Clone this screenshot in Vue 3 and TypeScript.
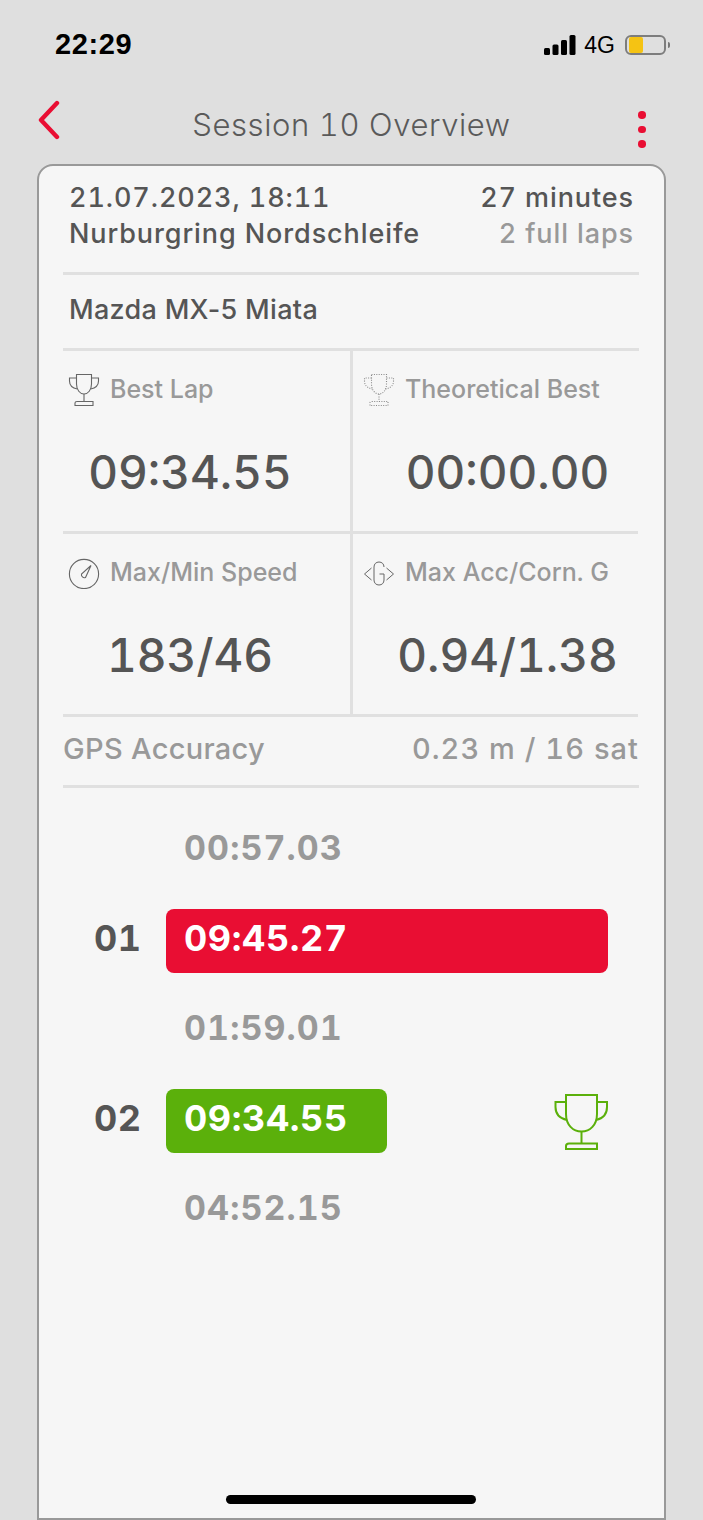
<script setup lang="ts">
interface Stat { label: string; value: string; icon: string }
const stats: Stat[] = [
  { label: 'Best Lap', value: '09:34.55', icon: 'trophy' },
  { label: 'Theoretical Best', value: '00:00.00', icon: 'dotted' },
  { label: 'Max/Min Speed', value: '183/46', icon: 'gauge' },
  { label: 'Max Acc/Corn. G', value: '0.94/1.38', icon: 'g' },
]
</script>

<template>
  <div class="screen">
    <div class="status">
      <span class="clock">22:29</span>
      <div class="status-right">
        <svg width="32" height="20" viewBox="0 0 32 20" class="signal">
          <rect x="0" y="13" width="6" height="7" rx="1.5" />
          <rect x="8.5" y="9.5" width="6" height="10.5" rx="1.5" />
          <rect x="17" y="5" width="6" height="15" rx="1.5" />
          <rect x="25.5" y="0" width="6" height="20" rx="1.5" />
        </svg>
        <span class="net">4G</span>
        <div class="battery"><div class="battery-fill"></div></div>
        <div class="battery-cap"></div>
      </div>
    </div>

    <header class="nav">
      <svg class="back" width="24" height="40" viewBox="0 0 24 40">
        <path d="M20 3 L4 20 L20 37" fill="none" stroke="#e90e33" stroke-width="4.4" stroke-linecap="round" stroke-linejoin="round" />
      </svg>
      <h1 class="title">Session 10 Overview</h1>
      <div class="more"><i></i><i></i><i></i></div>
    </header>

    <main class="card">
      <section class="summary">
        <div class="summary-line">
          <span class="dark">21.07.2023, 18:11</span>
          <span class="dark">27 minutes</span>
        </div>
        <div class="summary-line">
          <span class="dark">Nurburgring Nordschleife</span>
          <span class="muted">2 full laps</span>
        </div>
      </section>
      <div class="model">Mazda MX-5 Miata</div>

      <div class="stats">
        <div v-for="s in stats" :key="s.label" class="stat">
          <div class="stat-label">
            <svg class="stat-icon" width="32" height="34" viewBox="0 0 32 34" fill="none" stroke="#666" stroke-width="1.1">
              <g v-if="s.icon === 'trophy'">
                <path d="M8.5 2.5 H23.5 V12 C23.5 18 20 22 16 22 C12 22 8.5 18 8.5 12 Z" />
                <path d="M8.5 6 H1.5 V9 C1.5 13 4 16 9.4 17" />
                <path d="M23.5 6 H30.5 V9 C30.5 13 28 16 22.6 17" />
                <path d="M16 22 V29.5" />
                <path d="M7 33.5 V31 Q7 29.5 9 29.5 H25 V33.5 Z" />
              </g>
              <g v-else-if="s.icon === 'dotted'" stroke="#888" stroke-dasharray="1 1.4">
                <path d="M8.5 2.5 H23.5 V12 C23.5 18 20 22 16 22 C12 22 8.5 18 8.5 12 Z" />
                <path d="M8.5 6 H1.5 V9 C1.5 13 4 16 9.4 17" />
                <path d="M23.5 6 H30.5 V9 C30.5 13 28 16 22.6 17" />
                <path d="M16 22 V29.5" />
                <path d="M7 33.5 V31 Q7 29.5 9 29.5 H25 V33.5 Z" />
              </g>
              <g v-else-if="s.icon === 'gauge'">
                <circle cx="16" cy="19" r="14.6" />
                <path d="M23 10.5 L13.5 19 A3 3 0 0 0 17.5 22.5 Z" />
              </g>
              <g v-else stroke-width="1">
                <path d="M8.5 13 L1.5 19 L8.5 25" />
                <path d="M23.5 13 L30.5 19 L23.5 25" />
                <path d="M21 12 C21 9 19 7 16 7 C13 7 11 9 11 12 V25 C11 28 13 30 16 30 C19 30 21 28 21 25 V19 H16.5" />
              </g>
            </svg>
            <span>{{ s.label }}</span>
          </div>
          <div class="stat-value">{{ s.value }}</div>
        </div>
      </div>

      <div class="gps">
        <span>GPS Accuracy</span>
        <span class="gps-value">0.23 m / 16 sat</span>
      </div>

      <section class="laps">
        <div class="split">00:57.03</div>
        <div class="lap">
          <span class="lap-no">01</span>
          <div class="lap-track">
            <div class="lap-bar red">09:45.27</div>
          </div>
        </div>
        <div class="split">01:59.01</div>
        <div class="lap">
          <span class="lap-no">02</span>
          <div class="lap-track">
            <div class="lap-bar green">09:34.55</div>
            <svg class="lap-trophy" width="55" height="58" viewBox="0 0 55 58" fill="none" stroke="#5bb00b" stroke-width="2">
              <path d="M13 1 H44 V20 C44 31 37 37.5 28.5 37.5 C20 37.5 13 31 13 20 Z" />
              <path d="M13 8 H2.5 V13 C2.5 20 7 24.5 14 26" />
              <path d="M44 8 H54 V13 C54 20 50 24.5 43 26" />
              <path d="M28.5 37.5 V49.5" />
              <path d="M13 55 V52 Q13 49.5 16 49.5 H44 V55 Z" />
            </svg>
          </div>
        </div>
        <div class="split">04:52.15</div>
      </section>
      <div class="home"></div>
    </main>
  </div>
</template>

<style scoped>
.screen {
  width: 703px;
  height: 1520px;
  background: #dfdfdf;
  overflow: hidden;
  font-family: Inter, "Liberation Sans", sans-serif;
  font-variant-numeric: tabular-nums;
  color: #555;
  box-sizing: border-box;
  display: flex;
  flex-direction: column;
}
.status {
  height: 88px;
  flex: none;
  display: flex;
  justify-content: space-between;
  align-items: flex-start;
  padding: 27px 33px 0 55px;
  box-sizing: border-box;
}
.clock {
  font-family: "Liberation Sans", Arial, sans-serif;
  font-size: 29px;
  font-weight: 700;
  letter-spacing: 0.6px;
  color: #000;
  line-height: 34px;
}
.status-right {
  display: flex;
  align-items: center;
  height: 34px;
  margin-top: 1px;
}
.signal { fill: #000; margin-right: 9px; margin-top: -1px; }
.net {
  font-family: "Liberation Sans", Arial, sans-serif;
  font-size: 23px;
  color: #000;
  margin-right: 10px;
  margin-left: -1px;
  line-height: 34px;
}
.battery {
  width: 41px;
  height: 20px;
  box-sizing: border-box;
  border: 2px solid #7d7d7d;
  border-radius: 6px;
  padding: 0 2px;
}
.battery-fill {
  width: 14px;
  height: 100%;
  background: #f5c313;
  border-radius: 2px;
}
.battery-cap {
  width: 2px;
  height: 6px;
  margin-left: 2px;
  background: #777;
  border-radius: 0 2px 2px 0;
}
.nav {
  height: 76px;
  flex: none;
  position: relative;
  display: flex;
  justify-content: center;
  align-items: flex-start;
}
.back { position: absolute; left: 37px; top: 12px; }
.more {
  position: absolute;
  left: 638px;
  top: 23px;
  display: flex;
  flex-direction: column;
  gap: 7px;
}
.more i {
  display: block;
  width: 7.5px;
  height: 7.5px;
  border-radius: 50%;
  background: #e90e33;
}
.title {
  margin: 17px 0 0;
  font-size: 31px;
  font-weight: 300;
  line-height: 40px;
  letter-spacing: 0.6px;
  color: #5a5a5a;
}
.card {
  flex: 1;
  position: relative;
  margin: 0 37px;
  border: 2px solid #999;
  border-radius: 16px 16px 0 0;
  background: #f6f6f6;
  padding: 0 25px 0 24px;
  box-sizing: border-box;
  min-height: 0;
}
.summary {
  height: 109px;
  box-sizing: border-box;
  padding: 14px 5px 0 6px;
  border-bottom: 3px solid #e0e0e0;
}
.summary-line {
  display: flex;
  justify-content: space-between;
  font-size: 27px;
  line-height: 36px;
  letter-spacing: 0.9px;
}
.dark { color: #555; font-weight: 500; }
.muted { color: #999; font-weight: 500; }
.model {
  height: 76px;
  box-sizing: border-box;
  padding: 0 6px 5px;
  display: flex;
  align-items: center;
  font-size: 27px;
  font-weight: 500;
  font-variant-numeric: normal;
  letter-spacing: 0.3px;
  color: #555;
  border-bottom: 3px solid #e0e0e0;
}
.stats {
  display: grid;
  grid-template-columns: 290px 285px;
}
.stat {
  height: 183px;
  box-sizing: border-box;
  border-bottom: 3px solid #e0e0e0;
  padding: 21px 0 0 5px;
}
.stat:nth-child(2n + 1) { border-right: 3px solid #e0e0e0; }
.stat:nth-child(2n) { padding-left: 10px; }
.stat:nth-child(2n + 1) .stat-value { margin-right: 33px; margin-left: -5px; }
.stat:nth-child(2n) .stat-value { margin-right: -14px; }
.stat-label {
  display: flex;
  align-items: center;
  gap: 10px;
  height: 34px;
  font-size: 25px;
  font-weight: 500;
  color: #999;
  white-space: nowrap;
}
.stat-icon { flex: none; }
.stat-value {
  margin-top: 38px;
  text-align: center;
  font-size: 46px;
  font-weight: 500;
  color: #555;
  line-height: 56px;
}
.gps {
  height: 71px;
  box-sizing: border-box;
  display: flex;
  justify-content: space-between;
  align-items: center;
  padding-bottom: 6px;
  font-size: 29px;
  font-weight: 500;
  letter-spacing: 0.3px;
  color: #999;
  border-bottom: 3px solid #e0e0e0;
}
.gps-value { letter-spacing: 1.05px; }
.laps {
  padding-top: 31px;
  display: flex;
  flex-direction: column;
}
.split {
  height: 60px;
  padding-left: 121px;
  font-size: 34px;
  font-weight: 700;
  letter-spacing: 1.1px;
  color: #999;
  line-height: 58px;
}
.lap {
  display: flex;
  align-items: flex-start;
  height: 120px;
  padding: 30px 31px 0 31px;
  box-sizing: border-box;
}
.lap-no {
  width: 72px;
  flex: none;
  font-size: 36px;
  font-weight: 700;
  letter-spacing: 0.6px;
  color: #555;
  line-height: 58px;
}
.lap-track {
  flex: 1;
  display: flex;
  justify-content: space-between;
  align-items: flex-start;
}
.lap-bar {
  height: 64px;
  border-radius: 8px;
  color: #fff;
  font-size: 36px;
  font-weight: 700;
  letter-spacing: 0.6px;
  line-height: 58px;
  padding-left: 18px;
  box-sizing: border-box;
}
.red { width: 100%; background: #e90e33; }
.green { width: 221px; background: #5bb00b; }
.lap-trophy { margin-top: 5px; }
.home {
  position: absolute;
  left: 187px;
  bottom: 14px;
  width: 250px;
  height: 9px;
  border-radius: 5px;
  background: #000;
}
</style>
